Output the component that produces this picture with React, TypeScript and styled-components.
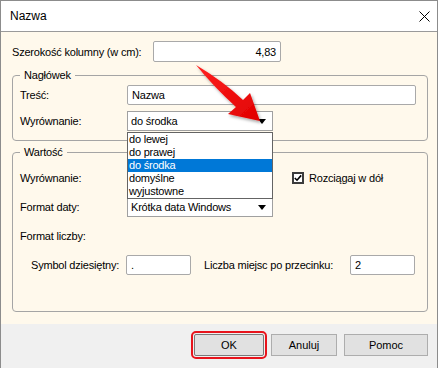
import styled, { createGlobalStyle } from 'styled-components'

// Okno dialogowe "Nazwa" – ustawienia kolumny.
const Global = createGlobalStyle`
  html, body { margin: 0; padding: 0; background: #fff; }
  body {
    font-family: "Liberation Sans", Arial, sans-serif;
    font-size: 11px; color: #000;
    letter-spacing: -0.2px;
  }
  * { box-sizing: border-box; }
`

const Window = styled.div`
  position: relative;
  width: 438px; height: 368px;
  border: 1px solid #8c8c8c; border-bottom: none;
  display: flex; flex-direction: column;
  background: #fff;
`
const TitleBar = styled.div`
  height: 31px; flex: none;
  display: flex; align-items: center; justify-content: space-between;
  padding: 0 7px 0 9px;
  border-bottom: 1px solid #9a9a9a;
  font-size: 12px; letter-spacing: 0;
`
const Body = styled.div`
  flex: 1;
  background: #fff9ec;
  padding: 9px 9px 0 11px;
  display: flex; flex-direction: column;
`
const Footer = styled.div`
  height: 44px; flex: none;
  background: #f0f0f0;
  display: flex; justify-content: flex-end; align-items: flex-start;
  gap: 7px;
  padding: 10px 9px 0 0;
`
const Row = styled.div<{ $indent?: number }>`
  display: flex; align-items: center;
  height: 20px;
  padding-left: ${p => p.$indent ?? 0}px;
`
const TopRow = styled(Row)`
  height: 21px;
  margin-bottom: 6px;
`
const Label = styled.span<{ $w: number; $ml?: number }>`
  width: ${p => p.$w}px; flex: none;
  margin-left: ${p => p.$ml ?? 0}px;
  white-space: nowrap;
`
const Input = styled.div<{ $w: number; $right?: boolean }>`
  width: ${p => p.$w}px; height: 100%;
  background: #fff;
  border: 1px solid #a9a9a9; border-radius: 2px;
  display: flex; align-items: center;
  justify-content: ${p => (p.$right ? 'flex-end' : 'flex-start')};
  padding: 0 4px 0 4px;
`
const Group = styled.fieldset<{ $pb: number; $mt?: number }>`
  margin: ${p => p.$mt ?? 0}px 0 0; min-width: 0;
  border: 1px solid #a5a5a5; border-radius: 4px;
  padding: 0 7px ${p => p.$pb}px 7px;
  width: 416px;
  display: flex; flex-direction: column;
`
const Legend = styled.legend`
  padding: 0 4px; margin-left: 0;
  line-height: 14px;
`
const Rows = styled.div<{ $gap: number; $pt: number }>`
  display: flex; flex-direction: column;
  gap: ${p => p.$gap}px;
  padding-top: ${p => p.$pt}px;
`
const SelectWrap = styled.div`
  position: relative;
  width: 146px; height: 100%;
`
const Select = styled.div`
  width: 100%; height: 100%;
  background: #fff;
  border: 1px solid #a0a0a0;
  display: flex; align-items: center; justify-content: space-between;
  padding: 0 6px 0 3px;
`
const Caret = styled.span`
  width: 0; height: 0;
  margin-left: auto;
  border-left: 4px solid transparent;
  border-right: 4px solid transparent;
  border-top: 5px solid #000;
`
const List = styled.ul`
  position: absolute; left: 0; top: 100%;
  width: 146px; margin: 1px 0 0; padding: 0;
  list-style: none;
  background: #fff;
  border: 1px solid #646464;
  z-index: 3;
`
const Item = styled.li<{ $active?: boolean }>`
  height: 13px; line-height: 13px;
  padding-left: 1px;
  background: ${p => (p.$active ? '#0078d7' : 'transparent')};
  color: ${p => (p.$active ? '#fff' : '#000')};
`
const Check = styled.label`
  display: flex; align-items: center; gap: 5px;
  margin-left: 19px;
`
const Box = styled.span`
  width: 12px; height: 12px;
  border: 2px solid #3c3c3c;
  background: #fff;
  display: flex; align-items: center; justify-content: center;
`
const Button = styled.button<{ $w: number; $focus?: boolean }>`
  width: ${p => p.$w}px; height: 22px;
  background: #e1e1e1;
  border: 1px solid ${p => (p.$focus ? '#7a7a7a' : '#adadad')};
  border-radius: ${p => (p.$focus ? '2px' : '0')};
  font: inherit; color: #000;
  outline: ${p => (p.$focus ? '2px solid #e8141c' : 'none')};
  outline-offset: 1px;
  padding: 0;
`
const Overlay = styled.svg`
  position: absolute; left: 0; top: 0;
  pointer-events: none;
  z-index: 5;
`

const options = ['do lewej', 'do prawej', 'do środka', 'domyślne', 'wyjustowne']

export default function App() {
  return (
    <>
      <Global />
      <Window>
        <TitleBar>
          <span>Nazwa</span>
          <svg width="11" height="11" viewBox="0 0 11 11">
            <path d="M0.5 0.5 L10.5 10.5 M10.5 0.5 L0.5 10.5" stroke="#000" strokeWidth="1" />
          </svg>
        </TitleBar>
        <Body>
          <TopRow>
            <Label $w={141}>Szerokość kolumny (w cm):</Label>
            <Input $w={128} $right>4,83</Input>
          </TopRow>

          <Group $pb={9}>
            <Legend>Nagłówek</Legend>
            <Rows $gap={6} $pt={3}>
              <Row>
                <Label $w={107}>Treść:</Label>
                <Input $w={289}>Nazwa</Input>
              </Row>
              <Row>
                <Label $w={107}>Wyrównanie:</Label>
                <SelectWrap>
                  <Select>do środka<Caret /></Select>
                  <List>
                    {options.map(o => (
                      <Item key={o} $active={o === 'do środka'}>{o}</Item>
                    ))}
                  </List>
                </SelectWrap>
              </Row>
            </Rows>
          </Group>

          <Group $pb={36} $mt={4}>
            <Legend>Wartość</Legend>
            <Rows $gap={9} $pt={9}>
              <Row>
                <Label $w={107}>Wyrównanie:</Label>
                <SelectWrap>
                  {/* zasłonięte przez otwartą listę powyżej */}
                  <Select><Caret /></Select>
                </SelectWrap>
                <Check>
                  <Box>
                    <svg width="8" height="8" viewBox="0 0 8 8">
                      <path d="M0.8 4 L3 6.2 L7.2 1.4" fill="none" stroke="#000" strokeWidth="1.6" />
                    </svg>
                  </Box>
                  Rozciągaj w dół
                </Check>
              </Row>
              <Row>
                <Label $w={107}>Format daty:</Label>
                <SelectWrap>
                  <Select>Krótka data Windows<Caret /></Select>
                </SelectWrap>
              </Row>
              <Row>
                <Label $w={107}>Format liczby:</Label>
              </Row>
              <Row $indent={11}>
                <Label $w={95}>Symbol dziesiętny:</Label>
                <Input $w={65}>.</Input>
                <Label $w={146} $ml={13}>Liczba miejsc po przecinku:</Label>
                <Input $w={65}>2</Input>
              </Row>
            </Rows>
          </Group>
        </Body>
        <Footer>
          <Button $w={70} $focus>OK</Button>
          <Button $w={66}>Anuluj</Button>
          <Button $w={84}>Pomoc</Button>
        </Footer>

        <Overlay width="438" height="368" viewBox="0 0 438 368">
          <defs>
            <filter id="shadow" x="-20%" y="-20%" width="140%" height="140%">
              <feDropShadow dx="1.5" dy="2" stdDeviation="1.5" floodColor="#000" floodOpacity="0.35" />
            </filter>
            <linearGradient id="red" x1="0" y1="0" x2="1" y2="1">
              <stop offset="0" stopColor="#ff2020" />
              <stop offset="1" stopColor="#e00000" />
            </linearGradient>
          </defs>
          <path
            d="M195 64 Q222 80 242 99 L249 92 L259 120 L227 113 L235 106 Q213 86 195 64 Z"
            fill="url(#red)"
            filter="url(#shadow)"
          />
        </Overlay>
      </Window>
    </>
  )
}
